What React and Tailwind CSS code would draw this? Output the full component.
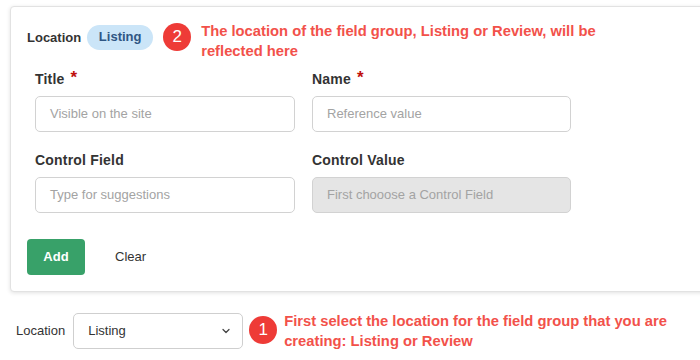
import { ChevronDown } from "lucide-react"

const FONT = { fontFamily: '"Liberation Sans", Arial, sans-serif' }

const Field = ({ label, required, placeholder, disabled }) => (
  <div className="flex flex-col">
    <div className="flex items-center h-[16px] text-[14px] font-bold text-[#333] tracking-[0.2px]">
      {label}
      {required && <span className="ml-[6px] -mt-[3px] text-[#c0100d] text-[17px] leading-none">*</span>}
    </div>
    <div
      className={`mt-[9px] h-[36px] rounded-[5px] border border-[#d2d2d2] flex items-center px-[14px] text-[13px] text-[#a3a3a3] ${
        disabled ? "bg-[#e5e5e5]" : "bg-white"
      }`}
    >
      {placeholder}
    </div>
  </div>
)

const Badge = ({ n }) => (
  <div className="w-[28px] h-[28px] rounded-full bg-[#ee3b37] flex items-center justify-center text-white text-[17px] shrink-0">
    {n}
  </div>
)

export default function App() {
  return (
    <div className="w-[700px] h-[360px] overflow-hidden bg-white" style={FONT}>
      <div className="ml-[10px] mt-[6px] w-[720px] rounded-[4px] border border-[#e2e2e2] bg-white shadow-[0_1px_4px_rgba(0,0,0,0.12)] pt-[14px] pl-[16px] pb-[16px]">
        <div className="flex items-start">
          <div className="flex items-center h-[28px] mt-[2px]">
            <span className="text-[13px] font-bold text-[#333] mt-[2px]">Location</span>
            <span className="ml-[6px] h-[25px] w-[66px] rounded-full bg-[#cbe5f8] text-[#2f5684] text-[13px] font-bold flex items-center justify-center">
              Listing
            </span>
            <div className="ml-[10px]">
              <Badge n="2" />
            </div>
          </div>
          <div className="ml-[10px] text-[14.75px] font-bold leading-[20px] text-[#f2514a]">
            The location of the field group, Listing or Review, will be
            <br />
            reflected here
          </div>
        </div>

        <div className="pl-[8px] mt-[10px] grid grid-cols-[260px_259px] gap-x-[17px] gap-y-[20px]">
          <Field label="Title" required placeholder="Visible on the site" />
          <Field label="Name" required placeholder="Reference value" />
          <Field label="Control Field" placeholder="Type for suggestions" />
          <Field label="Control Value" placeholder="First chooose a Control Field" disabled />
        </div>

        <div className="mt-[26px] flex items-center">
          <button className="h-[36px] w-[58px] rounded-[4px] bg-[#38a169] text-white text-[13px] font-bold">
            Add
          </button>
          <button className="ml-[30px] text-[13px] text-[#333]">Clear</button>
        </div>
      </div>

      <div className="mt-[19px] ml-[16px] flex items-center">
        <span className="text-[13px] text-[#333]">Location</span>
        <div className="ml-[8px] h-[36px] w-[170px] rounded-[5px] border border-[#cfcfcf] flex items-center justify-between pl-[14px] pr-[10px] text-[13px] text-[#333]">
          Listing
          <ChevronDown size={12} strokeWidth={2.5} className="text-[#444]" />
        </div>
        <div className="ml-[6px] flex items-center">
          <div className="-mt-[3px]">
            <Badge n="1" />
          </div>
          <div className="ml-[7px] text-[14.75px] font-bold leading-[20px] text-[#f2514a]">
            First select the location for the field group that you are
            <br />
            creating: Listing or Review
          </div>
        </div>
      </div>
    </div>
  )
}
